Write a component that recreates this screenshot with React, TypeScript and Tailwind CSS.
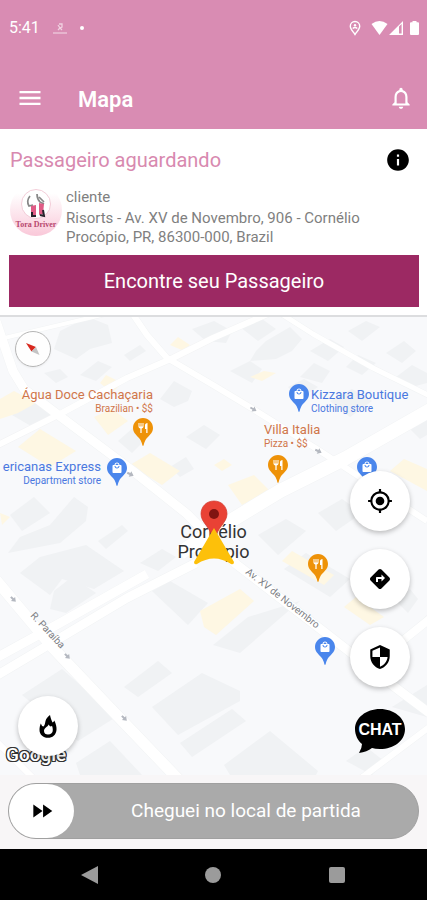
import type { ReactNode } from 'react';
import {
  MdDirections,
  MdFastForward,
  MdInfo,
  MdLocalMall,
  MdMenu,
  MdMyLocation,
  MdNotificationsNone,
  MdRestaurant,
  MdSecurity,
} from 'react-icons/md';

// ─────────────────────────────────────────────────────────────────────────────
// Map data — coordinates are in a 427 x 458 map space
// ─────────────────────────────────────────────────────────────────────────────

const MAP_WIDTH = 427;
const MAP_HEIGHT = 458;

type PlaceKind = 'food' | 'shop';

interface Place {
  name: string;
  detail: string;
  kind: PlaceKind;
  side: 'left' | 'right' | 'top' | 'topLeft' | 'none';
  x: number;
  y: number;
}

const PLACES: Place[] = [
  { name: 'Água Doce Cachaçaria', detail: 'Brazilian • $$', kind: 'food', side: 'topLeft', x: 143, y: 129 },
  { name: 'ericanas Express', detail: 'Department store', kind: 'shop', side: 'left', x: 117, y: 169 },
  { name: 'Kizzara Boutique', detail: 'Clothing store', kind: 'shop', side: 'right', x: 299, y: 95 },
  { name: 'Villa Italia', detail: 'Pizza • $$', kind: 'food', side: 'top', x: 278, y: 166 },
  { name: '', detail: '', kind: 'shop', side: 'none', x: 367, y: 168 },
  { name: '', detail: '', kind: 'food', side: 'none', x: 318, y: 265 },
  { name: '', detail: '', kind: 'shop', side: 'none', x: 325, y: 348 },
];

const PIN_COLORS: Record<PlaceKind, string> = {
  food: 'text-[#ee9208]',
  shop: 'text-[#4a86ec]',
};

const LABEL_COLORS: Record<PlaceKind, string> = {
  food: 'text-[#d0764a]',
  shop: 'text-[#4a78e0]',
};

const LABEL_SIDES: Record<Place['side'], string> = {
  left: 'right-full top-0.5 mr-1.5 items-end',
  right: 'left-full top-1 ml-0.5 items-start',
  top: 'bottom-full left-0 mb-1 -ml-1 items-start',
  topLeft: 'bottom-full right-0 mb-0.5 items-end',
  none: 'hidden',
};

const BUILDINGS = [
  '60,14 88,0 108,8 112,26 90,32 76,42 54,32',
  '124,38 140,28 146,34 130,44',
  '80,58 98,44 112,50 96,64',
  '44,56 60,52 68,60 56,66',
  '160,82 174,64 192,74 188,84 174,90',
  '12,98 34,84 52,96 36,112',
  '186,120 204,108 220,118 206,132',
  '118,124 134,110 148,120 132,136',
  '170,150 186,140 194,152 180,160',
  '10,198 34,180 50,196 22,214',
  '50,208 74,180 88,190 86,204 60,226 8,236 20,220',
  '98,224 122,208 128,214 106,232',
  '192,12 214,4 232,14 226,26 206,24',
  '240,10 262,2 276,12 258,24',
  '266,24 290,10 302,22 292,34 276,42 250,44 256,34',
  '230,54 250,44 262,52 252,66',
  '300,60 314,46 330,54 322,66',
  '288,70 304,62 318,70 300,82',
  '310,34 330,22 344,30 328,44',
  '346,50 358,38 376,46 362,58',
  '386,36 404,24 416,34 402,46',
  '396,60 412,48 427,56 427,66 412,70',
  '348,14 366,4 380,10 362,24',
  '330,84 352,72 372,84 350,100',
  '410,112 427,100 427,118 420,122',
  '318,196 342,182 362,196 336,214',
  '258,218 286,202 306,214 278,238',
  '284,252 306,236 350,262 330,280',
  '20,256 40,240 86,228 124,254 94,272 62,262 50,278',
  '54,274 72,260 96,276 66,296 50,292',
  '140,246 162,232 176,240 158,254',
  '152,274 170,264 208,286 188,308',
  '22,378 62,352 116,400 78,424',
  '124,370 158,344 172,356 138,380',
  '152,390 202,356 240,374 240,384 178,418',
  '180,426 232,392 246,404 192,440',
  '76,446 110,424 142,458 80,458',
  '213,328 248,300 300,284 240,336',
  '224,448 270,414 318,454 316,458 230,458',
  '346,444 366,430 384,444 372,458',
  '392,390 427,368 427,400',
  '396,284 410,272 418,282 408,296',
  '404,320 427,298 427,310',
];

const YELLOW_BUILDINGS = [
  '0,82 14,74 36,86 18,96 0,102',
  '18,130 40,112 76,134 50,150',
  '94,100 112,92 128,104 108,118',
  '130,148 150,136 180,154 162,168',
  '100,66 106,58 122,66 112,76',
  '170,28 178,20 190,28 184,34',
  '250,60 264,54 276,56 262,64',
  '228,168 254,158 270,174 242,188',
  '390,154 404,142 427,152 427,174',
  '282,244 292,234 334,258 324,268',
  '200,294 240,272 254,284 216,318 204,310',
  '344,290 356,280 384,300 370,308',
  '0,196 10,200 2,208',
  '214,148 224,142 232,148 222,154',
];

const STREETS = [
  { d: 'M-4 4 L13 54 L24 72 L53 94 L133 154 L187 197 L236 247 L323 314 L400 374 L432 398', width: 9 },
  { d: 'M132 -4 L147 18 L167 41 L213 68 L253 92 L320 134 L427 204', width: 6 },
  { d: 'M-4 129 L60 97 L127 61 L173 41 L213 21 L270 -4', width: 6 },
  { d: 'M432 92 L346 141 L280 174 L214 214 L180 236', width: 14 },
  { d: 'M196 246 L127 281 L60 321 L-4 359', width: 9 },
  { d: 'M147 257 L60 306 L-4 341', width: 9 },
  { d: 'M-4 263 L53 331 L110 391 L178 462', width: 11 },
  { d: 'M280 -4 L313 17 L373 51 L432 80', width: 5 },
  { d: 'M-4 23 L110 -4', width: 4 },
  { d: 'M432 300 L385 338', width: 8 },
  { d: 'M-4 424 L34 462', width: 6 },
  { d: 'M432 408 L360 462', width: 6 },
];

const WAY_ARROWS = [
  'translate(13 282) rotate(45)',
  'translate(67 339) rotate(45)',
  'translate(124 401) rotate(45)',
  'translate(130 157) rotate(25)',
  'translate(253 92) rotate(30)',
  'translate(318 134) rotate(25)',
];

// ─────────────────────────────────────────────────────────────────────────────
// Map pieces
// ─────────────────────────────────────────────────────────────────────────────

function StreetMap() {
  return (
    <svg
      className="absolute inset-0 h-full w-full"
      viewBox={`0 0 ${MAP_WIDTH} ${MAP_HEIGHT}`}
      preserveAspectRatio="xMidYMid slice"
      aria-hidden="true"
    >
      <rect width={MAP_WIDTH} height={MAP_HEIGHT} fill="#f8f9fb" />
      {BUILDINGS.map((points) => (
        <polygon key={points} points={points} fill="#f0f2f4" />
      ))}
      {YELLOW_BUILDINGS.map((points) => (
        <polygon key={points} points={points} fill="#fef7e3" />
      ))}
      {STREETS.map((s) => (
        <path key={s.d} d={s.d} fill="none" stroke="#f2f4f5" strokeWidth={s.width + 1} strokeLinejoin="round" />
      ))}
      {STREETS.map((s) => (
        <path key={s.d} d={s.d} fill="none" stroke="#ffffff" strokeWidth={s.width} strokeLinejoin="round" />
      ))}
      {WAY_ARROWS.map((t) => (
        <path key={t} d="M-3 -1 H0 V-3 L4 0 L0 3 V1 H-3 Z" fill="#b4b8c0" transform={t} />
      ))}
      <g fill="#7d8085" fontFamily="Roboto, sans-serif" fontSize="10">
        <text transform="translate(30 299) rotate(47)">R. Paraíba</text>
        <text transform="translate(245 256) rotate(38)">Av. XV de Novembro</text>
      </g>
    </svg>
  );
}

function PlacePin({ place }: { place: Place }) {
  const Icon = place.kind === 'food' ? MdRestaurant : MdLocalMall;
  return (
    <div
      className="absolute h-7 w-5 -translate-x-1/2 -translate-y-full"
      style={{ left: `${(place.x / MAP_WIDTH) * 100}%`, top: `${(place.y / MAP_HEIGHT) * 100}%` }}
    >
      <svg className={`h-7 w-5 ${PIN_COLORS[place.kind]}`} viewBox="0 0 20 28" fill="currentColor">
        <path d="M10 0 C4.500 0 0 4.500 0 10 C0 15.500 5 18 7.500 22 Q9 25 9.300 27 Q10 29 10.700 27 Q11 25 12.500 22 C15 18 20 15.500 20 10 C20 4.500 15.500 0 10 0 Z" />
      </svg>
      <Icon className="absolute left-1 top-1 size-3 text-white" />
      {place.name && (
        <div className={`absolute flex flex-col whitespace-nowrap ${LABEL_SIDES[place.side]} ${LABEL_COLORS[place.kind]}`}>
          <span className="text-[13px] leading-[14px]">{place.name}</span>
          <span className="text-[10px] leading-[14px]">{place.detail}</span>
        </div>
      )}
    </div>
  );
}

function RoundButton({ label, children }: { label: string; children: ReactNode }) {
  return (
    <button
      type="button"
      aria-label={label}
      className="flex size-15 items-center justify-center rounded-full bg-white text-black shadow-[0_2px_5px_rgba(0,0,0,0.25)]"
    >
      {children}
    </button>
  );
}

function Avatar() {
  return (
    <svg className="size-13 shrink-0" viewBox="0 0 52 52" role="img" aria-label="cliente">
      <defs>
        <linearGradient id="avatar-bg" x1="0" y1="0" x2="0" y2="1">
          <stop offset="0.1" stopColor="#ffffff" />
          <stop offset="1" stopColor="#f9c3d5" />
        </linearGradient>
        <clipPath id="avatar-clip">
          <circle cx="26" cy="22" r="26" />
        </clipPath>
      </defs>
      <g clipPath="url(#avatar-clip)">
        <rect width="52" height="52" fill="url(#avatar-bg)" />
        <circle cx="26" cy="16" r="14.500" fill="#ffffff" stroke="#eeb9c9" strokeWidth="0.700" />
        <path d="M20 8 Q16 13 19 18 L23 17 M27 6 Q27 11 30 14 L34 16 M29 9 L34 14" fill="none" stroke="#888" strokeWidth="1.700" />
        <path d="M21 18 L26 17 L26 27 L21 28 Z M29 15 L34 16 L33 26 L29 27 Z" fill="#df5c86" />
        <path d="M22 24 L22 28 L26 28 M30 27 L34 28 L33 22" fill="none" stroke="#27222b" strokeWidth="2" />
        <text
          x="26"
          y="39"
          textAnchor="middle"
          fontFamily="Liberation Serif, serif"
          fontSize="8"
          fontWeight="700"
          fill="#b8476f"
        >
          Tora Driver
        </text>
      </g>
    </svg>
  );
}

// ─────────────────────────────────────────────────────────────────────────────
// Screen sections
// ─────────────────────────────────────────────────────────────────────────────

function StatusBar() {
  return (
    <div className="flex h-14 items-center justify-between px-2 text-white">
      <div className="flex items-center gap-3 pl-px">
        <span className="text-base">5:41</span>
        <svg className="h-3 w-4" viewBox="0 0 16 12" fill="none" stroke="currentColor">
          <path d="M6 8 L8 6 L6 3 M7 2 L10 2 L10 5 L8 6 L10 8" strokeWidth="1.300" opacity="0.600" />
          <path d="M1 11 H15" opacity="0.700" />
        </svg>
        <span className="size-1 rounded-full bg-white" />
      </div>
      <div className="flex items-center">
        <svg className="mr-2.5 h-4 w-3" viewBox="0 0 12 16" fill="none" stroke="currentColor" strokeWidth="1.400">
          <path d="M6 1.500 C3.200 1.500 1.300 3.600 1.300 6.200 C1.300 9 4 11.500 6 14.500 C8 11.500 10.700 9 10.700 6.200 C10.700 3.600 8.800 1.500 6 1.500 Z" />
          <circle cx="6" cy="5.300" r="1.200" fill="currentColor" stroke="none" />
          <path d="M3.700 8.500 Q6 6.500 8.300 8.500" />
        </svg>
        <svg className="h-4 w-[17px]" viewBox="0 0 17 16" fill="currentColor">
          <path d="M0.500 4 Q8.500 -2 16.500 4 L8.500 15 Z" />
        </svg>
        <svg className="mr-1.5 h-4 w-4" viewBox="0 0 16 16" fill="currentColor">
          <path fillRule="evenodd" d="M1 15 L15 1 V15 Z M11 6.500 V13.600 H13.600 V4 Z" />
        </svg>
        <svg className="h-4 w-[9px]" viewBox="0 0 9 16" fill="currentColor">
          <path d="M2.500 1 H6.500 V2.300 H8 Q9 2.300 9 3.300 V14 Q9 15 8 15 H1 Q0 15 0 14 V3.300 Q0 2.300 1 2.300 H2.500 Z" />
        </svg>
      </div>
    </div>
  );
}

function AppBar() {
  return (
    <header className="bg-[#d98cb3] text-white">
      <StatusBar />
      <div className="flex h-[73px] items-center pb-2 pt-4.5">
        <button type="button" aria-label="Menu" className="ml-4 flex size-7 items-center justify-center">
          <MdMenu className="size-7" />
        </button>
        <h1 className="ml-[34px] pt-1 text-[22px] font-semibold leading-7">Mapa</h1>
        <button type="button" aria-label="Notificações" className="ml-auto mr-3 flex size-7 items-center justify-center">
          <MdNotificationsNone className="size-[26px]" />
        </button>
      </div>
    </header>
  );
}

function PassengerCard() {
  return (
    <section className="border-b-2 border-[#dcdddf] bg-white px-2 pb-2 pt-[17px]">
      <div className="flex items-center justify-between px-0.5 pr-2">
        <h2 className="text-xl leading-7 text-[#d889af]">Passageiro aguardando</h2>
        <button type="button" aria-label="Informações" className="text-black">
          <MdInfo className="size-[26px]" />
        </button>
      </div>
      <div className="mt-3.5 flex gap-1 pl-0.5">
        <Avatar />
        <div className="text-[15px] leading-[19px] text-[#7f7f7f]">
          <p>cliente</p>
          <p className="mt-0.5">Risorts - Av. XV de Novembro, 906 - Cornélio Procópio, PR, 86300-000, Brazil</p>
        </div>
      </div>
      <div className="pl-px">
        <button type="button" className="mt-2 h-[52px] w-full bg-[#9c2963] text-xl text-white">
          Encontre seu Passageiro
        </button>
      </div>
    </section>
  );
}

function MapView() {
  return (
    <main className="relative min-h-96 flex-1 overflow-hidden">
      <StreetMap />

      <span className="absolute bottom-2 left-1.5 text-[19px] font-medium leading-6 text-white [text-shadow:1px_0_#333,-1px_0_#333,0_1px_#333,0_-1px_#333,1px_1px_#333,-1px_-1px_#333,1px_-1px_#333,-1px_1px_#333]">
        Google
      </span>

      <div className="absolute left-1/2 top-1/2 -translate-x-1/2 -translate-y-6 text-center text-lg leading-5 text-[#333]">
        Cornélio
        <br />
        Procópio
      </div>

      {PLACES.map((place) => (
        <PlacePin key={`${place.x}-${place.y}`} place={place} />
      ))}

      {/* Passenger marker and driver heading */}
      <svg
        className="absolute left-1/2 top-1/2 h-[66px] w-11 -translate-x-1/2 -translate-y-[46px]"
        viewBox="0 0 44 66"
        role="img"
        aria-label="Sua posição"
      >
        <path
          d="M22 1 C14 1 9 7 9 14 C9 23 19 27 20.500 39 Q22 43 23.500 39 C25 27 35 23 35 14 C35 7 30 1 22 1 Z"
          fill="#e94235"
          stroke="#d23a2e"
          strokeWidth="0.700"
        />
        <circle cx="22" cy="14" r="5" fill="#811411" />
        <path d="M22 28 L42 62 Q42 65 39 64 Q22 53 5 64 Q2 65 2 62 Z" fill="#fdc00a" />
      </svg>

      <button
        type="button"
        aria-label="Bússola"
        className="absolute left-[15px] top-3.5 flex size-9 items-center justify-center rounded-full border border-[#b5b5b5] bg-white/80 shadow-xs"
      >
        <svg className="size-4" viewBox="0 0 16 16">
          <path d="M1 2 L11 6 L6.500 10.500 Z" fill="#d8281e" />
          <path d="M11 6 L14.500 14 L6.500 10.500 Z" fill="#c4c4c4" />
        </svg>
      </button>

      <div className="absolute bottom-[22px] right-[17px] flex flex-col items-center gap-[18px]">
        <RoundButton label="Minha localização">
          <MdMyLocation className="size-[26px]" />
        </RoundButton>
        <RoundButton label="Rota">
          <MdDirections className="size-6" />
        </RoundButton>
        <RoundButton label="Segurança">
          <MdSecurity className="size-[26px]" />
        </RoundButton>
        <button type="button" className="relative mt-1 h-11 w-[50px]">
          <svg className="absolute inset-0 h-11 w-[50px]" viewBox="0 0 50 44" aria-hidden="true">
            <path d="M25 0 C39 0 50 9 50 20 C50 32 39 40 25 40 Q20 40 17 39 Q12 43 4 44 Q7 39 7 35 C3 32 0 26 0 20 C0 9 11 0 25 0 Z" fill="#000" />
          </svg>
          <span className="relative block pb-0.5 text-center font-[Liberation_Sans,sans-serif] text-base font-bold text-white">
            CHAT
          </span>
        </button>
      </div>

      <div className="absolute bottom-[19px] left-[18px]">
        <RoundButton label="Áreas quentes">
          <svg className="h-[23px] w-[18px]" viewBox="0 0 18 23" fill="currentColor">
            <path
              fillRule="evenodd"
              d="M11 0 C11.500 3 12.500 5 13.500 7.500 Q14.800 7 15.300 5.500 C17 9 17.800 12 17.500 15 C17 20 13.500 22.800 9 22.800 C4 22.800 0.500 19.500 0.500 15 C0.500 12.500 1 10.500 1.800 8.500 Q2.500 11 4.500 11.500 C6 10 6 8 6.500 6 C7 3.500 9 1.500 11 0 Z M9.800 9.500 C8.500 12 5 13 5 16 C5 18.300 6.700 19.600 9 19.600 C12 19.600 13.800 17.800 13.800 15 C13.800 13.300 13.500 12 13 10.800 C12 12 10.500 11.500 9.800 9.500 Z"
            />
          </svg>
        </RoundButton>
      </div>
    </main>
  );
}

function ArrivalSlider() {
  return (
    <div className="bg-[#f8f6f7] px-2 pb-2.5 pt-2">
      <button
        type="button"
        className="flex h-14 w-full items-center rounded-full border border-[#a0a0a0] bg-[#aaa] text-left text-white"
      >
        <span className="flex h-full w-[65px] shrink-0 items-center justify-center rounded-full bg-white text-black">
          <MdFastForward className="size-[26px]" />
        </span>
        <span className="flex-1 text-center text-[19px]">Cheguei no local de partida</span>
      </button>
    </div>
  );
}

function NavigationBar() {
  return (
    <nav className="grid h-[51px] grid-cols-3 items-center justify-items-center bg-black px-7 text-[#9b9b9b]">
      <button type="button" aria-label="Voltar">
        <svg className="size-[18px]" viewBox="0 0 18 18" fill="currentColor">
          <path d="M17 0 V18 L0 9 Z" />
        </svg>
      </button>
      <button type="button" aria-label="Início">
        <span className="block size-4 rounded-full bg-current" />
      </button>
      <button type="button" aria-label="Recentes">
        <span className="block size-4 rounded-xs bg-current" />
      </button>
    </nav>
  );
}

export default function App() {
  return (
    <div className="flex min-h-screen flex-col bg-white font-[Roboto,sans-serif]">
      <AppBar />
      <PassengerCard />
      <MapView />
      <ArrivalSlider />
      <NavigationBar />
    </div>
  );
}
